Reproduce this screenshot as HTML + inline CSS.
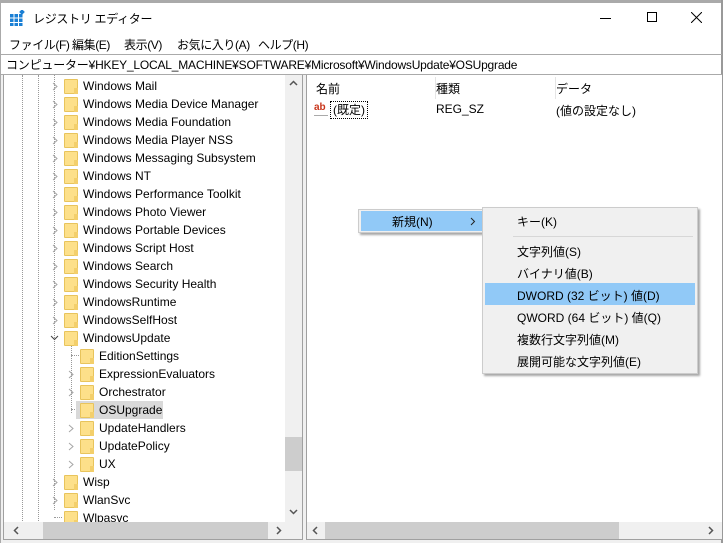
<!DOCTYPE html>
<html><head><meta charset="utf-8"><style>
*{margin:0;padding:0;box-sizing:border-box}
body{width:723px;height:543px;background:#fff;font-family:"Segoe UI","Liberation Sans","Noto Sans CJK JP",sans-serif;font-size:12px;color:#000;position:relative;overflow:hidden}
.a{position:absolute;white-space:nowrap}
.r{position:absolute;height:18px;line-height:18px;white-space:nowrap}
.f{position:absolute;width:14px;height:15px;background:#fde08a;border:1px solid #e8c45c;border-radius:1px}
.f:after{content:"";position:absolute;right:-1px;bottom:-1px;width:4px;height:6px;background:#f3cf6b}
.c{position:absolute;top:5px;width:6px;height:9px}
.t{position:absolute;top:0}
.m{position:absolute;top:36px;letter-spacing:-0.4px}
</style></head><body>
<div class="a" style="left:0;top:0;width:723px;height:3px;background:#aaa"></div>
<div class="a" style="left:0;top:0;width:1px;height:543px;background:#aaa"></div>
<div class="a" style="left:721px;top:0;width:2px;height:543px;background:#999"></div>
<svg class="a" style="left:10px;top:10px" width="16" height="16" viewBox="0 0 16 16"><g fill="#1a7fd4"><rect x="0" y="4" width="3.5" height="3.5"/><rect x="4.5" y="4" width="3.5" height="3.5"/><rect x="9" y="4" width="3.5" height="3.5"/><rect x="0" y="8.5" width="3.5" height="3.5"/><rect x="4.5" y="8.5" width="3.5" height="3.5"/><rect x="9" y="8.5" width="3.5" height="3.5"/><rect x="0" y="13" width="3.5" height="3"/><rect x="4.5" y="13" width="3.5" height="3"/><rect x="9" y="13" width="3.5" height="3"/><rect x="10" y="0" width="4" height="4" transform="rotate(45 12 2)"/></g></svg>
<div class="a" style="left:33px;top:10px;font-size:12px;letter-spacing:-0.3px">レジストリ エディター</div>
<div class="a" style="left:600px;top:18px;width:11px;height:1px;background:#000"></div>
<div class="a" style="left:647px;top:12px;width:10px;height:10px;border:1px solid #000"></div>
<svg class="a" style="left:691px;top:12px" width="11" height="11"><path d="M0 0L11 11M11 0L0 11" stroke="#000" stroke-width="1"/></svg>
<div class="m" style="left:9px">ファイル(F)</div>
<div class="m" style="left:72px">編集(E)</div>
<div class="m" style="left:124px">表示(V)</div>
<div class="m" style="left:177px">お気に入り(A)</div>
<div class="m" style="left:258px">ヘルプ(H)</div>
<div class="a" style="left:1px;top:54px;width:721px;height:21px;border-top:1px solid #aaa;border-bottom:1px solid #aaa"></div>
<div class="a" style="left:6px;top:56px;letter-spacing:-0.2px">コンピューター¥HKEY_LOCAL_MACHINE¥SOFTWARE¥Microsoft¥WindowsUpdate¥OSUpgrade</div>
<div class="a" style="left:1px;top:75px;width:720px;height:468px;background:#f0f0f0"></div>
<div class="a" style="left:3px;top:75px;width:300px;height:465px;background:#fff;border:1px solid #a0a0a0;border-top:none;overflow:hidden">
 <div class="a" style="left:18px;top:0;height:450px;border-left:1px dotted #999"></div>
 <div class="a" style="left:34px;top:0;height:450px;border-left:1px dotted #999"></div>
 <div class="a" style="left:50px;top:0;height:435px;border-left:1px dotted #999"></div>
 <div class="a" style="left:67px;top:270px;height:68px;border-left:1px dotted #999"></div>
 <div class="a" style="left:67px;top:280px;width:8px;border-top:1px dotted #999"></div>
 <div class="a" style="left:67px;top:334px;width:8px;border-top:1px dotted #999"></div>
 <div class="a" style="left:50px;top:442px;width:8px;border-top:1px dotted #999"></div>
 <div class="r" style="left:0;top:2px;width:280px"><svg class="c" style="left:48px"><path d="M1 1L5 4.5L1 8" stroke="#a6a6a6" fill="none"/></svg><span class="f" style="left:60px;top:2px"></span><span class="t" style="left:79px">Windows Mail</span></div>
 <div class="r" style="left:0;top:20px;width:280px"><svg class="c" style="left:48px"><path d="M1 1L5 4.5L1 8" stroke="#a6a6a6" fill="none"/></svg><span class="f" style="left:60px;top:2px"></span><span class="t" style="left:79px">Windows Media Device Manager</span></div>
 <div class="r" style="left:0;top:38px;width:280px"><svg class="c" style="left:48px"><path d="M1 1L5 4.5L1 8" stroke="#a6a6a6" fill="none"/></svg><span class="f" style="left:60px;top:2px"></span><span class="t" style="left:79px">Windows Media Foundation</span></div>
 <div class="r" style="left:0;top:56px;width:280px"><svg class="c" style="left:48px"><path d="M1 1L5 4.5L1 8" stroke="#a6a6a6" fill="none"/></svg><span class="f" style="left:60px;top:2px"></span><span class="t" style="left:79px">Windows Media Player NSS</span></div>
 <div class="r" style="left:0;top:74px;width:280px"><svg class="c" style="left:48px"><path d="M1 1L5 4.5L1 8" stroke="#a6a6a6" fill="none"/></svg><span class="f" style="left:60px;top:2px"></span><span class="t" style="left:79px">Windows Messaging Subsystem</span></div>
 <div class="r" style="left:0;top:92px;width:280px"><svg class="c" style="left:48px"><path d="M1 1L5 4.5L1 8" stroke="#a6a6a6" fill="none"/></svg><span class="f" style="left:60px;top:2px"></span><span class="t" style="left:79px">Windows NT</span></div>
 <div class="r" style="left:0;top:110px;width:280px"><svg class="c" style="left:48px"><path d="M1 1L5 4.5L1 8" stroke="#a6a6a6" fill="none"/></svg><span class="f" style="left:60px;top:2px"></span><span class="t" style="left:79px">Windows Performance Toolkit</span></div>
 <div class="r" style="left:0;top:128px;width:280px"><svg class="c" style="left:48px"><path d="M1 1L5 4.5L1 8" stroke="#a6a6a6" fill="none"/></svg><span class="f" style="left:60px;top:2px"></span><span class="t" style="left:79px">Windows Photo Viewer</span></div>
 <div class="r" style="left:0;top:146px;width:280px"><svg class="c" style="left:48px"><path d="M1 1L5 4.5L1 8" stroke="#a6a6a6" fill="none"/></svg><span class="f" style="left:60px;top:2px"></span><span class="t" style="left:79px">Windows Portable Devices</span></div>
 <div class="r" style="left:0;top:164px;width:280px"><svg class="c" style="left:48px"><path d="M1 1L5 4.5L1 8" stroke="#a6a6a6" fill="none"/></svg><span class="f" style="left:60px;top:2px"></span><span class="t" style="left:79px">Windows Script Host</span></div>
 <div class="r" style="left:0;top:182px;width:280px"><svg class="c" style="left:48px"><path d="M1 1L5 4.5L1 8" stroke="#a6a6a6" fill="none"/></svg><span class="f" style="left:60px;top:2px"></span><span class="t" style="left:79px">Windows Search</span></div>
 <div class="r" style="left:0;top:200px;width:280px"><svg class="c" style="left:48px"><path d="M1 1L5 4.5L1 8" stroke="#a6a6a6" fill="none"/></svg><span class="f" style="left:60px;top:2px"></span><span class="t" style="left:79px">Windows Security Health</span></div>
 <div class="r" style="left:0;top:218px;width:280px"><svg class="c" style="left:48px"><path d="M1 1L5 4.5L1 8" stroke="#a6a6a6" fill="none"/></svg><span class="f" style="left:60px;top:2px"></span><span class="t" style="left:79px">WindowsRuntime</span></div>
 <div class="r" style="left:0;top:236px;width:280px"><svg class="c" style="left:48px"><path d="M1 1L5 4.5L1 8" stroke="#a6a6a6" fill="none"/></svg><span class="f" style="left:60px;top:2px"></span><span class="t" style="left:79px">WindowsSelfHost</span></div>
 <div class="r" style="left:0;top:254px;width:280px"><svg class="a" style="left:46px;top:6px" width="9" height="6"><path d="M1 1L4.5 4.5L8 1" stroke="#444" fill="none"/></svg><span class="f" style="left:60px;top:2px"></span><span class="t" style="left:79px">WindowsUpdate</span></div>
 <div class="r" style="left:0;top:272px;width:280px"><span class="f" style="left:76px;top:2px"></span><span class="t" style="left:95px">EditionSettings</span></div>
 <div class="r" style="left:0;top:290px;width:280px"><svg class="c" style="left:64px"><path d="M1 1L5 4.5L1 8" stroke="#a6a6a6" fill="none"/></svg><span class="f" style="left:76px;top:2px"></span><span class="t" style="left:95px">ExpressionEvaluators</span></div>
 <div class="r" style="left:0;top:308px;width:280px"><svg class="c" style="left:64px"><path d="M1 1L5 4.5L1 8" stroke="#a6a6a6" fill="none"/></svg><span class="f" style="left:76px;top:2px"></span><span class="t" style="left:95px">Orchestrator</span></div>
 <div class="r" style="left:0;top:326px;width:280px"><span class="a" style="left:72px;top:0;width:87px;height:18px;background:#d9d9d9"></span><span class="f" style="left:76px;top:2px"></span><span class="t" style="left:95px">OSUpgrade</span></div>
 <div class="r" style="left:0;top:344px;width:280px"><svg class="c" style="left:64px"><path d="M1 1L5 4.5L1 8" stroke="#a6a6a6" fill="none"/></svg><span class="f" style="left:76px;top:2px"></span><span class="t" style="left:95px">UpdateHandlers</span></div>
 <div class="r" style="left:0;top:362px;width:280px"><svg class="c" style="left:64px"><path d="M1 1L5 4.5L1 8" stroke="#a6a6a6" fill="none"/></svg><span class="f" style="left:76px;top:2px"></span><span class="t" style="left:95px">UpdatePolicy</span></div>
 <div class="r" style="left:0;top:380px;width:280px"><svg class="c" style="left:64px"><path d="M1 1L5 4.5L1 8" stroke="#a6a6a6" fill="none"/></svg><span class="f" style="left:76px;top:2px"></span><span class="t" style="left:95px">UX</span></div>
 <div class="r" style="left:0;top:398px;width:280px"><svg class="c" style="left:48px"><path d="M1 1L5 4.5L1 8" stroke="#a6a6a6" fill="none"/></svg><span class="f" style="left:60px;top:2px"></span><span class="t" style="left:79px">Wisp</span></div>
 <div class="r" style="left:0;top:416px;width:280px"><svg class="c" style="left:48px"><path d="M1 1L5 4.5L1 8" stroke="#a6a6a6" fill="none"/></svg><span class="f" style="left:60px;top:2px"></span><span class="t" style="left:79px">WlanSvc</span></div>
 <div class="r" style="left:0;top:434px;width:280px"><span class="f" style="left:60px;top:2px"></span><span class="t" style="left:79px">Wlpasvc</span></div>
 <div class="a" style="left:281px;top:0;width:17px;height:447px;background:#f0f0f0"></div>
 <div class="a" style="left:281px;top:362px;width:17px;height:34px;background:#cdcdcd"></div>
 <svg class="a" style="left:285px;top:5px" width="9" height="6"><path d="M1 5L4.5 1.5L8 5" stroke="#555" stroke-width="1.5" fill="none"/></svg>
 <svg class="a" style="left:285px;top:434px" width="9" height="6"><path d="M1 1L4.5 4.5L8 1" stroke="#555" stroke-width="1.5" fill="none"/></svg>
 <div class="a" style="left:0;top:447px;width:298px;height:17px;background:#f0f0f0"></div>
 <div class="a" style="left:39px;top:447px;width:225px;height:17px;background:#cdcdcd"></div>
 <svg class="a" style="left:9px;top:451px" width="6" height="9"><path d="M5 1L1.5 4.5L5 8" stroke="#555" stroke-width="1.5" fill="none"/></svg>
 <svg class="a" style="left:272px;top:451px" width="6" height="9"><path d="M1 1L4.5 4.5L1 8" stroke="#555" stroke-width="1.5" fill="none"/></svg>
</div>
<div class="a" style="left:306px;top:75px;width:416px;height:465px;background:#fff;border:1px solid #a0a0a0;border-top:none;border-right:none;overflow:hidden">
 <div class="a" style="left:9px;top:5px">名前</div>
 <div class="a" style="left:128px;top:2px;width:1px;height:22px;background:#e5e5e5"></div>
 <div class="a" style="left:129px;top:5px">種類</div>
 <div class="a" style="left:248px;top:2px;width:1px;height:22px;background:#e5e5e5"></div>
 <div class="a" style="left:249px;top:5px">データ</div>
 <div class="a" style="left:7px;top:27px;width:14px;height:14px;font-size:10px;font-weight:bold;color:#c8341a;line-height:12px;border-bottom:1px solid #aaa">ab</div>
 <div class="a" style="left:23px;top:26px;border:1px dotted #000;padding:0 2px;line-height:16px">(既定)</div>
 <div class="a" style="left:129px;top:27px">REG_SZ</div>
 <div class="a" style="left:249px;top:27px">(値の設定なし)</div>
 <div class="a" style="left:0;top:447px;width:416px;height:17px;background:#f0f0f0"></div>
 <div class="a" style="left:18px;top:447px;width:294px;height:17px;background:#cdcdcd"></div>
 <svg class="a" style="left:5px;top:451px" width="6" height="9"><path d="M5 1L1.5 4.5L5 8" stroke="#555" stroke-width="1.5" fill="none"/></svg>
 <svg class="a" style="left:401px;top:451px" width="6" height="9"><path d="M1 1L4.5 4.5L1 8" stroke="#555" stroke-width="1.5" fill="none"/></svg>
</div>
<div class="a" style="left:358px;top:209px;width:128px;height:24px;background:#f0f0f0;border:1px solid #ccc;box-shadow:2px 2px 2px rgba(0,0,0,.35)">
 <div class="a" style="left:2px;top:1px;width:124px;height:20px;background:#91c9f7"></div>
 <div class="a" style="left:33px;top:3px">新規(N)</div>
 <svg class="a" style="left:111px;top:7px" width="6" height="9"><path d="M1 1L4.5 4.5L1 8" stroke="#222" fill="none"/></svg>
</div>
<div class="a" style="left:482px;top:207px;width:216px;height:167px;background:#f0f0f0;border:1px solid #ccc;box-shadow:2px 2px 2px rgba(0,0,0,.35)">
 <div class="a" style="left:34px;top:5px">キー(K)</div>
 <div class="a" style="left:30px;top:28px;width:180px;height:1px;background:#d7d7d7"></div>
 <div class="a" style="left:34px;top:35px">文字列値(S)</div>
 <div class="a" style="left:34px;top:57px">バイナリ値(B)</div>
 <div class="a" style="left:2px;top:75px;width:210px;height:22px;background:#91c9f7"></div>
 <div class="a" style="left:34px;top:79px">DWORD (32 ビット) 値(D)</div>
 <div class="a" style="left:34px;top:101px">QWORD (64 ビット) 値(Q)</div>
 <div class="a" style="left:34px;top:123px">複数行文字列値(M)</div>
 <div class="a" style="left:34px;top:145px">展開可能な文字列値(E)</div>
</div>
</body></html>
